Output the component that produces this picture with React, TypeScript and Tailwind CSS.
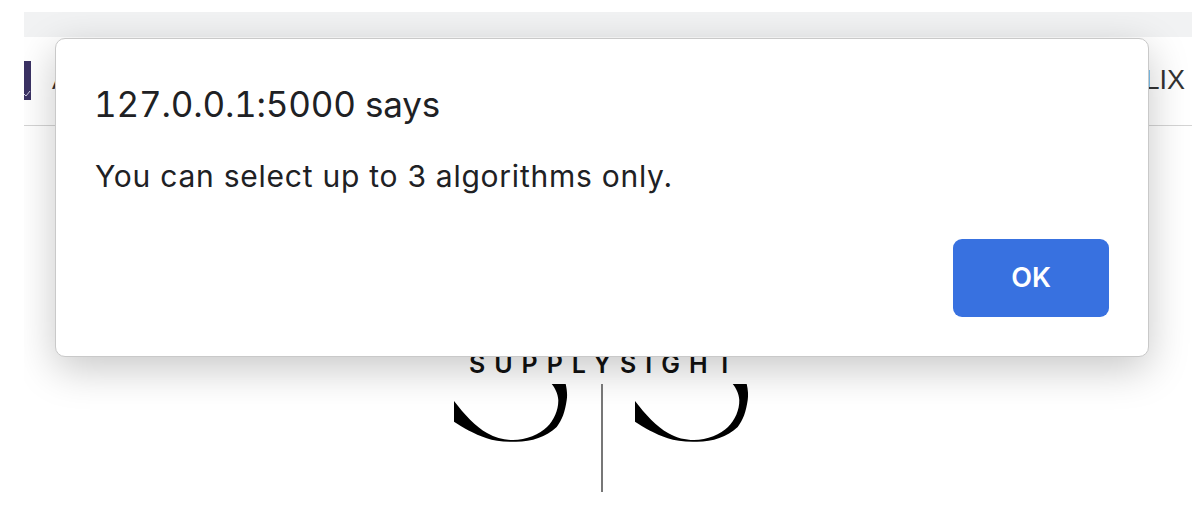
function LogoArc() {
  return (
    <svg width="114" height="58" viewBox="0 0 114 58" className="block">
      <path d="M0 17 C10 30 22 43 33 49 C42 54 50 56 59 56 C72 56 86 50 93 43 C100 36 104.5 26 104.3 16 C104 10 101 4 97.7 0 L111.7 0 C113 6 113.5 11 112.7 16 C111 28 108 36 102.7 43 C92 53 78 57.7 62 57.7 C50 58 40 57 32.7 54.3 C20 50 8 43 0 37.7 Z" fill="#000" />
    </svg>
  )
}

export default function App() {
  return (
    <div className="w-[1192px] h-[514px] bg-white pl-[24px] pt-[12px] font-['Inter',sans-serif]">
      <div className="relative h-full overflow-hidden">
        {/* Browser bar */}
        <div className="h-[25px] bg-[#f1f2f3]" />

        {/* Site nav behind the dialog */}
        <div className="h-[89px] flex items-center justify-between border-b border-[#d4d4d4] bg-white pr-[7px] pb-[2px]">
          <div className="flex items-center gap-[21px]">
            <div className="relative w-[7px] h-[39px] bg-[#3b3264] overflow-hidden">
              <svg width="7" height="39" viewBox="0 0 7 39" className="absolute inset-0">
                <path d="M0 33 L2 35 L6 30" stroke="#cfcbe0" strokeWidth="1" fill="none" />
              </svg>
            </div>
            <span className="text-[26px] leading-none font-['Liberation_Sans',sans-serif] text-[#333]">A</span>
          </div>
          <span className="text-[27px] leading-none font-['Liberation_Sans',sans-serif] text-[#333]">FLIX</span>
        </div>

        {/* Page logo, partly under the dialog */}
        <div className="flex justify-center w-[1155px] mt-[226px]">
          <div className="text-[25px] leading-[24px] font-semibold tracking-[0.36em] text-[#111] pl-[8px]">
            SUPPLYSIGHT
          </div>
        </div>
        <div className="flex justify-center w-[1155px] mt-[8px] gap-[67px]">
          <LogoArc />
          <LogoArc />
        </div>

        {/* Alert dialog */}
        <div className="absolute left-[31px] top-[26px] w-[1094px] h-[319px] rounded-[10px] bg-white border border-[#c9c9c9] shadow-[0_12px_40px_rgba(0,0,0,0.22)] pl-[39px] pr-[39px] pt-[45px] pb-[39px] flex flex-col text-[#202124]">
          <div className="text-[35px] leading-[40px] tabular-nums tracking-[-0.2px] -ml-[1px]">127.0.0.1:5000 says</div>
          <div className="mt-[34px] text-[30px] leading-[36px] tracking-[0.75px]">You can select up to 3 algorithms only.</div>
          <div className="mt-auto flex justify-end">
            <button className="w-[156px] h-[78px] rounded-[9px] bg-[#3871e0] text-white text-[27px] font-semibold">OK</button>
          </div>
        </div>

        <div className="absolute left-[577px] top-[372px] w-[1.5px] h-[108px] bg-[#777]" />
      </div>
    </div>
  )
}
